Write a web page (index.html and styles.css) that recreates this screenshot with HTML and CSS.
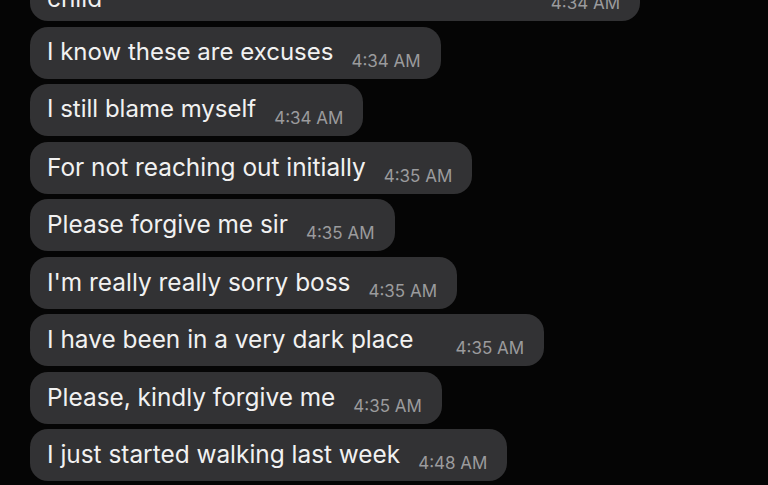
FILE: index.html
```html
<!DOCTYPE html>
<html lang="en">
<head>
    <meta charset="UTF-8">
    <meta name="viewport" content="width=device-width, initial-scale=1.0">
    <title>Chat</title>
    <link rel="stylesheet" href="styles.css">
</head>
<body>
    <div class="thread">
        <div class="bubble bubble--wide">
            <span class="msg msg--cut">child</span>
            <span class="time">4:34 AM</span>
        </div>
        <div class="bubble">
            <span class="msg msg--narrow">I know these are excuses</span>
            <span class="time">4:34 AM</span>
        </div>
        <div class="bubble">
            <span class="msg msg--narrow">I still blame myself</span>
            <span class="time">4:34 AM</span>
        </div>
        <div class="bubble">
            <span class="msg">For not reaching out initially</span>
            <span class="time">4:35 AM</span>
        </div>
        <div class="bubble">
            <span class="msg">Please forgive me sir</span>
            <span class="time">4:35 AM</span>
        </div>
        <div class="bubble">
            <span class="msg">I'm really really sorry boss</span>
            <span class="time">4:35 AM</span>
        </div>
        <div class="bubble">
            <span class="msg msg--gap">I have been in a very dark place</span>
            <span class="time">4:35 AM</span>
        </div>
        <div class="bubble">
            <span class="msg">Please, kindly forgive me</span>
            <span class="time">4:35 AM</span>
        </div>
        <div class="bubble">
            <span class="msg">I just started walking last week</span>
            <span class="time">4:48 AM</span>
        </div>
    </div>
</body>
</html>
```

FILE: styles.css
```css
/* chat thread */
html, body {
    margin: 0;
    height: 100%;
    background-color: #050505;
    overflow: hidden;
}

body {
    font-family: "Inter", "Liberation Sans", sans-serif;
    -webkit-font-smoothing: antialiased;
}

.thread {
    display: flex;
    flex-direction: column;
    align-items: flex-start;
    gap: 5.5px;
    margin-top: -31px;
    padding-left: 30px;
}

.bubble {
    display: flex;
    align-items: flex-end;
    box-sizing: border-box;
    height: 52px;
    padding: 0 20px 0 17px;
    background-color: #323234;
    border-radius: 18px;
}

.bubble--wide {
    width: 610px;
    justify-content: space-between;
}

.msg {
    font-size: 24.4px;
    line-height: 24px;
    margin-bottom: 15px;
    color: #f1f1f1;
}

.msg--narrow {
    font-size: 24px;
}

.msg--cut {
    margin-bottom: 11px;
}

.msg--gap {
    margin-right: 24px;
}

.time {
    font-size: 17px;
    line-height: 17px;
    margin: 0 0 9px 18px;
    color: #9b9b9d;
}
```
